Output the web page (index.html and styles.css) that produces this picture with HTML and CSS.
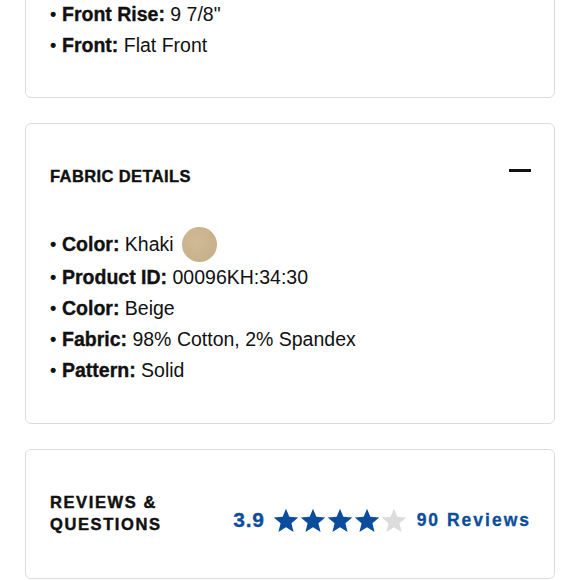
FILE: index.html
```html
<!DOCTYPE html>
<html>
<head>
<meta charset="utf-8">
<link rel="stylesheet" href="styles.css">
</head>
<body>
<div class="page">
  <section class="card card-top">
    <ul class="specs">
      <li><b>Front Rise:</b> 9 7/8"</li>
      <li><b>Front:</b> Flat Front</li>
    </ul>
  </section>

  <section class="card card-fabric">
    <div class="card-head">
      <h2>FABRIC DETAILS</h2>
      <span class="minus"></span>
    </div>
    <ul class="specs">
      <li><b>Color:</b> Khaki <span class="swatch"></span></li>
      <li><b>Product ID:</b> 00096KH:34:30</li>
      <li><b>Color:</b> Beige</li>
      <li><b>Fabric:</b> 98% Cotton, 2% Spandex</li>
      <li><b>Pattern:</b> Solid</li>
    </ul>
  </section>

  <section class="card card-reviews">
    <h2 class="rev-title">REVIEWS &amp;<br>QUESTIONS</h2>
    <div class="rating">
      <span class="score">3.9</span>
      <span class="stars">
        <svg viewBox="0 0 24 24" class="star on"><path d="M12 1.5l3.1 7.6 8.2.6-6.3 5.3 2 8-7-4.3-7 4.3 2-8L.7 9.7l8.2-.6z"/></svg>
        <svg viewBox="0 0 24 24" class="star on"><path d="M12 1.5l3.1 7.6 8.2.6-6.3 5.3 2 8-7-4.3-7 4.3 2-8L.7 9.7l8.2-.6z"/></svg>
        <svg viewBox="0 0 24 24" class="star on"><path d="M12 1.5l3.1 7.6 8.2.6-6.3 5.3 2 8-7-4.3-7 4.3 2-8L.7 9.7l8.2-.6z"/></svg>
        <svg viewBox="0 0 24 24" class="star on"><path d="M12 1.5l3.1 7.6 8.2.6-6.3 5.3 2 8-7-4.3-7 4.3 2-8L.7 9.7l8.2-.6z"/></svg>
        <svg viewBox="0 0 24 24" class="star off"><path d="M12 1.5l3.1 7.6 8.2.6-6.3 5.3 2 8-7-4.3-7 4.3 2-8L.7 9.7l8.2-.6z"/></svg>
      </span>
      <span class="count">90 Reviews</span>
    </div>
  </section>
</div>
</body>
</html>
```
FILE: styles.css
```css
html, body {
  margin: 0;
  padding: 0;
  background: #fff;
}
body {
  font-family: "Liberation Sans", Arial, sans-serif;
  color: #111;
  overflow: hidden;
}
.page {
  width: 530px;
  margin-left: 25px;
  display: flex;
  flex-direction: column;
  gap: 25px;
}
.card {
  border: 1.5px solid #dcdcdc;
  border-radius: 6px;
  background: #fff;
  padding: 0 23px 0 24px;
}
.card-top {
  margin-top: -40px;
  padding-top: 38px;
  padding-bottom: 36px;
}
.specs {
  list-style: none;
  margin: 0;
  padding: 0;
  font-size: 19.5px;
  line-height: 31px;
}
.specs li {
  display: flex;
  align-items: center;
  white-space: pre;
}
.specs li::before {
  content: "\2022";
  font-weight: 700;
  font-size: 18px;
  width: 12px;
  flex: none;
}
.specs b {
  font-weight: 700;
  -webkit-text-stroke: 0.35px #111;
}
.swatch {
  display: inline-block;
  width: 35px;
  height: 35px;
  border-radius: 50%;
  background: radial-gradient(circle at 40% 40%, #d0bb97, #c4ac85);
  margin-left: 3px;
}
.card-fabric {
  padding-top: 40px;
  padding-bottom: 37px;
}
.card-head {
  display: flex;
  justify-content: space-between;
  align-items: flex-start;
  margin-bottom: 41px;
}
.card-head h2 {
  margin: 2px 0 0;
  font-size: 16.5px;
  font-weight: 700;
  letter-spacing: 0.4px;
  line-height: 20px;
  -webkit-text-stroke: 0.4px #111;
}
.minus {
  display: block;
  width: 22px;
  height: 3px;
  background: #111;
  margin-top: 5px;
}
.card-reviews {
  height: 130px;
  box-sizing: border-box;
  display: flex;
  align-items: center;
  justify-content: space-between;
  padding-bottom: 2px;
}
.rev-title {
  margin: 0;
  font-size: 16.5px;
  font-weight: 700;
  letter-spacing: 1.6px;
  line-height: 22px;
  -webkit-text-stroke: 0.45px #111;
}
.rating {
  display: flex;
  align-items: center;
  color: #0b4d9c;
  margin-top: 14px;
}
.score {
  font-size: 21px;
  font-weight: 700;
  letter-spacing: 0.7px;
  margin-right: 8px;
  -webkit-text-stroke: 0.3px #0b4d9c;
}
.stars {
  display: flex;
  gap: 1px;
  margin-right: 10px;
}
.star {
  width: 26px;
  height: 26px;
}
.star.on { fill: #0b4d9c; }
.star.off { fill: #dcdcdc; }
.count {
  font-size: 17.5px;
  font-weight: 700;
  letter-spacing: 2px;
  -webkit-text-stroke: 0.3px #0b4d9c;
}
```
